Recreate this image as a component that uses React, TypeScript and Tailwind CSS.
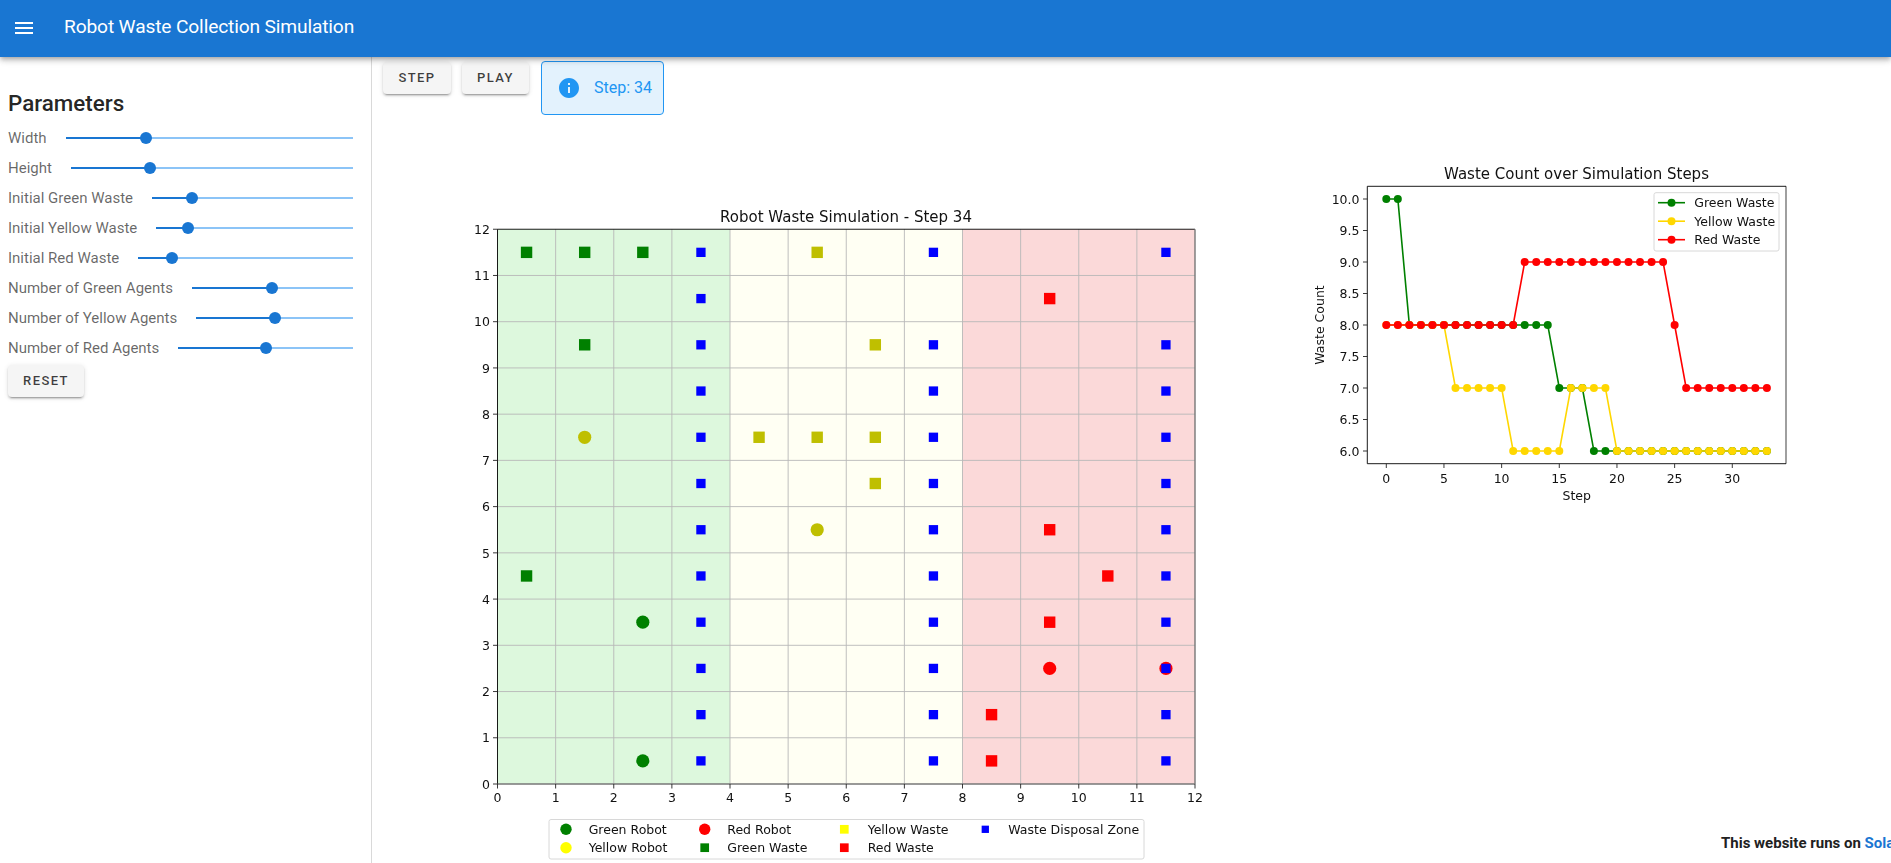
import React from 'react';

const sliders = [
  { label: 'Width', value: 0.28 },
  { label: 'Height', value: 0.28 },
  { label: 'Initial Green Waste', value: 0.2 },
  { label: 'Initial Yellow Waste', value: 0.16 },
  { label: 'Initial Red Waste', value: 0.158 },
  { label: 'Number of Green Agents', value: 0.5 },
  { label: 'Number of Yellow Agents', value: 0.5 },
  { label: 'Number of Red Agents', value: 0.5 },
];

const Slider: React.FC<{ label: string; value: number }> = ({ label, value }) => (
  <div className="flex h-[30px] items-center gap-[19px]">
    <span className="whitespace-nowrap text-[15px] text-black/60">{label}</span>
    <div className="relative h-[2px] flex-1 bg-[#8cc4f7]">
      <div className="absolute left-0 top-0 h-[2px] bg-[#1976d2]" style={{ width: `${value * 100}%` }} />
      <div
        className="absolute top-[-5px] ml-[-6px] h-3 w-3 rounded-full bg-[#1976d2]"
        style={{ left: `${value * 100}%` }}
      />
    </div>
  </div>
);

const Btn: React.FC<{ children: React.ReactNode; className?: string }> = ({ children, className }) => (
  <button
    className={`h-8 rounded bg-[#f5f5f5] text-[13px] font-medium uppercase tracking-[1.4px] text-black/75 shadow-[0_3px_1px_-2px_rgba(0,0,0,0.2),0_2px_2px_0_rgba(0,0,0,0.14),0_1px_5px_0_rgba(0,0,0,0.12)] ${className}`}
  >
    {children}
  </button>
);

// main plot, drawn in page coordinates through the viewBox
const gx = (v: number) => 497.5 + v * 58.125;
const gy = (v: number) => 784 - v * 46.23;
const range = (n: number) => Array.from({ length: n }, (_, i) => i);

const greenWaste = [[0, 11], [1, 11], [2, 11], [1, 9], [0, 4]];
const yellowWaste = [[5, 11], [6, 9], [4, 7], [5, 7], [6, 7], [6, 6]];
const redWaste = [[9, 10], [9, 5], [10, 4], [9, 3], [8, 1], [8, 0]];
const disposal = [
  ...range(12).map((y) => [3, y]),
  ...range(12).filter((y) => y !== 10).map((y) => [7, y]),
  ...range(12).filter((y) => y !== 10).map((y) => [11, y]),
];
const robots = [
  { c: '#bfbf00', p: [[1, 7], [5, 5]] },
  { c: '#008000', p: [[2, 3], [2, 0]] },
  { c: '#ff0000', p: [[9, 2], [11, 2]] },
];

const Square: React.FC<{ x: number; y: number; size: number; color: string }> = ({ x, y, size, color }) => (
  <rect x={x - size / 2} y={y - size / 2} width={size} height={size} fill={color} />
);

const legend = [
  { x: 566, tx: 588.7, y: 829.3, label: 'Green Robot', color: '#008000', round: true },
  { x: 566, tx: 588.7, y: 847.7, label: 'Yellow Robot', color: '#ffff00', round: true },
  { x: 704.7, tx: 727.3, y: 829.3, label: 'Red Robot', color: '#ff0000', round: true },
  { x: 704.7, tx: 727.3, y: 847.7, label: 'Green Waste', color: '#008000', size: 8.7 },
  { x: 844.3, tx: 867.7, y: 829.3, label: 'Yellow Waste', color: '#ffff00', size: 8.7 },
  { x: 844.3, tx: 867.7, y: 847.7, label: 'Red Waste', color: '#ff0000', size: 8.7 },
  { x: 985.3, tx: 1008.3, y: 829.3, label: 'Waste Disposal Zone', color: '#0000ff', size: 7.3 },
];

const GridPlot = () => (
  <svg
    viewBox="460 200 770 663"
    width={770}
    height={663}
    className="shrink-0 blur-[0.3px]"
    fontFamily="'DejaVu Sans', sans-serif"
    fill="#111"
  >
    <rect x={gx(0)} y={gy(12)} width={gx(4) - gx(0)} height={gy(0) - gy(12)} fill="#ddf8dd" />
    <rect x={gx(4)} y={gy(12)} width={gx(8) - gx(4)} height={gy(0) - gy(12)} fill="#fffff3" />
    <rect x={gx(8)} y={gy(12)} width={gx(12) - gx(8)} height={gy(0) - gy(12)} fill="#fbd9d9" />
    {range(11).map((i) => (
      <line key={i} x1={gx(i + 1)} x2={gx(i + 1)} y1={gy(12)} y2={gy(0)} stroke="#b8b8b8" strokeWidth={0.9} />
    ))}
    {range(11).map((i) => (
      <line key={i} y1={gy(i + 1)} y2={gy(i + 1)} x1={gx(0)} x2={gx(12)} stroke="#b8b8b8" strokeWidth={0.9} />
    ))}
    {robots.map((r) =>
      r.p.map(([x, y]) => <circle key={`${x}-${y}`} cx={gx(x + 0.5)} cy={gy(y + 0.5)} r={6.6} fill={r.c} />),
    )}
    {greenWaste.map(([x, y]) => <Square key={`${x}-${y}`} x={gx(x + 0.5)} y={gy(y + 0.5)} size={11.4} color="#008000" />)}
    {yellowWaste.map(([x, y]) => <Square key={`${x}-${y}`} x={gx(x + 0.5)} y={gy(y + 0.5)} size={11.4} color="#bfbf00" />)}
    {redWaste.map(([x, y]) => <Square key={`${x}-${y}`} x={gx(x + 0.5)} y={gy(y + 0.5)} size={11.4} color="#ff0000" />)}
    {disposal.map(([x, y]) => <Square key={`${x}-${y}`} x={gx(x + 0.5)} y={gy(y + 0.5)} size={9.3} color="#0000ff" />)}

    <line x1={gx(0)} x2={gx(0)} y1={gy(12)} y2={gy(0)} stroke="#000" strokeWidth={0.9} />
    <line x1={gx(0)} x2={gx(12)} y1={gy(12)} y2={gy(12)} stroke="#000" strokeWidth={0.9} />
    <line x1={gx(12)} x2={gx(12)} y1={gy(12)} y2={gy(0)} stroke="#777" strokeWidth={1.4} />
    <line x1={gx(0)} x2={gx(12)} y1={gy(0)} y2={gy(0)} stroke="#777" strokeWidth={1.4} />

    {range(13).map((i) => (
      <g key={i}>
        <line x1={gx(i)} x2={gx(i)} y1={784} y2={788.5} stroke="#222" strokeWidth={0.9} />
        <text x={gx(i)} y={802} fontSize={12.5} textAnchor="middle">{i}</text>
        <line x1={493} x2={497.5} y1={gy(i)} y2={gy(i)} stroke="#222" strokeWidth={0.9} />
        <text x={490} y={gy(i) + 4.7} fontSize={12.5} textAnchor="end">{i}</text>
      </g>
    ))}
    <text x={846} y={222} fontSize={15} textAnchor="middle">Robot Waste Simulation - Step 34</text>

    <rect x={549} y={819.5} width={595} height={39.5} rx={2} fill="#fff" stroke="#d8d8d8" />
    {legend.map((l) => (
      <g key={l.label}>
        {l.round ? (
          <circle cx={l.x} cy={l.y} r={5.7} fill={l.color} />
        ) : (
          <Square x={l.x} y={l.y} size={l.size ?? 8} color={l.color} />
        )}
        <text x={l.tx} y={l.y + 4.4} fontSize={12.5}>{l.label}</text>
      </g>
    ))}
  </svg>
);

// waste count line chart
const lx = (v: number) => 1386.3 + v * 11.533;
const ly = (v: number) => 451 - (v - 6) * 63;

const series = [
  { name: 'Green Waste', color: '#008000', y: [...Array(2).fill(10), ...Array(13).fill(8), ...Array(3).fill(7), ...Array(16).fill(6)] },
  { name: 'Yellow Waste', color: '#ffd700', y: [...Array(6).fill(8), ...Array(5).fill(7), ...Array(5).fill(6), ...Array(4).fill(7), ...Array(14).fill(6)] },
  { name: 'Red Waste', color: '#ff0000', y: [...Array(12).fill(8), ...Array(13).fill(9), 8, ...Array(8).fill(7)] },
];

const LinePlot = () => (
  <svg
    viewBox="1300 150 500 360"
    width={500}
    height={360}
    className="shrink-0 blur-[0.3px]"
    fontFamily="'DejaVu Sans', sans-serif"
    fill="#111"
  >
    <text x={1576.5} y={179} fontSize={15} textAnchor="middle">Waste Count over Simulation Steps</text>
    <line x1={1786} x2={1786} y1={186.3} y2={463.7} stroke="#777" strokeWidth={1.4} />
    <path d="M1786 186.3H1367.3V463.7H1786" fill="none" stroke="#000" strokeWidth={0.9} />
    {range(7).map((i) => (
      <g key={i}>
        <line x1={lx(i * 5)} x2={lx(i * 5)} y1={463.7} y2={468} stroke="#222" strokeWidth={0.9} />
        <text x={lx(i * 5)} y={482.5} fontSize={12.5} textAnchor="middle">{i * 5}</text>
      </g>
    ))}
    {range(9).map((i) => (
      <g key={i}>
        <line x1={1363} x2={1367.3} y1={ly(6 + i / 2)} y2={ly(6 + i / 2)} stroke="#222" strokeWidth={0.9} />
        <text x={1359.5} y={ly(6 + i / 2) + 4.7} fontSize={12.5} textAnchor="end">{(6 + i / 2).toFixed(1)}</text>
      </g>
    ))}
    <text x={1576.7} y={500} fontSize={12.5} textAnchor="middle">Step</text>
    <text x={1323.5} y={325} fontSize={12.5} textAnchor="middle" transform="rotate(-90 1323.5 325)">Waste Count</text>
    {series.map((s) => (
      <g key={s.name}>
        <polyline
          points={s.y.map((v, i) => `${lx(i)},${ly(v)}`).join(' ')}
          fill="none"
          stroke={s.color}
          strokeWidth={1.6}
        />
        {s.y.map((v, i) => <circle key={i} cx={lx(i)} cy={ly(v)} r={4} fill={s.color} />)}
      </g>
    ))}
    <rect x={1654} y={192.7} width={125} height={58.3} rx={2} fill="#fff" fillOpacity={0.85} stroke="#d8d8d8" />
    {series.map((s, i) => (
      <g key={s.name}>
        <line x1={1658} x2={1685} y1={202.7 + i * 18.5} y2={202.7 + i * 18.5} stroke={s.color} strokeWidth={1.6} />
        <circle cx={1671.5} cy={202.7 + i * 18.5} r={4} fill={s.color} />
        <text x={1694.3} y={207.2 + i * 18.5} fontSize={12.5}>{s.name}</text>
      </g>
    ))}
  </svg>
);

export default function App() {
  return (
    <div className="flex h-[863px] flex-col overflow-hidden bg-white font-['Roboto',sans-serif]">
      <header className="z-10 flex h-[57px] shrink-0 items-center bg-[#1976d2] pb-[2px] pl-3 text-white shadow-[0_2px_4px_-1px_rgba(0,0,0,0.2),0_4px_5px_0_rgba(0,0,0,0.14),0_1px_10px_0_rgba(0,0,0,0.12)]">
        <svg viewBox="0 0 24 24" width={24} height={24} fill="currentColor">
          <path d="M3 18h18v-2H3v2zm0-5h18v-2H3v2zm0-7v2h18V6H3z" />
        </svg>
        <h1 className="ml-7 whitespace-nowrap text-[19.2px] font-normal tracking-[-0.15px]">Robot Waste Collection Simulation</h1>
      </header>

      <div className="flex min-h-0 flex-1">
        <aside className="w-[372px] shrink-0 border-r border-[#d9d9d9] pl-2 pr-[18px]">
          <h2 className="mt-[31px] h-[35px] text-[22.4px] font-medium leading-[30px] text-black/[0.87]">Parameters</h2>
          {sliders.map((s) => (
            <Slider key={s.label} label={s.label} value={s.value} />
          ))}
          <Btn className="mt-[2px] w-[76px]">Reset</Btn>
        </aside>

        <main className="flex min-w-0 flex-1 flex-col">
          <div className="flex items-start gap-[11px] pl-[11px] pt-[4px]">
            <Btn className="mt-[1px] w-[68px]">Step</Btn>
            <Btn className="mt-[1px] mr-[1px] w-[67px]">Play</Btn>
            <div className="flex h-[54px] w-[123px] items-center gap-[13px] rounded border border-[#2196f3] bg-[#e3f2fd] pl-[15px] text-base text-[#2196f3]">
              <svg viewBox="0 0 24 24" width={24} height={24} fill="currentColor" className="shrink-0">
                <path d="M12 2C6.48 2 2 6.48 2 12s4.48 10 10 10 10-4.48 10-10S17.52 2 12 2zm1 15h-2v-6h2v6zm0-8h-2V7h2v2z" />
              </svg>
              <span className="whitespace-nowrap">Step: 34</span>
            </div>
          </div>
          <div className="flex min-h-0 flex-1 items-start pl-[88px]">
            <div className="mt-[85px]"><GridPlot /></div>
            <div className="ml-[70px] mt-[35px] flex flex-col">
              <LinePlot />
              <p className="ml-[421px] mt-[322px] whitespace-nowrap text-[15px] font-bold text-[#212121]">
                This website runs on <a className="text-[#1976d2]">Solara</a>
              </p>
            </div>
          </div>
        </main>
      </div>
    </div>
  );
}
